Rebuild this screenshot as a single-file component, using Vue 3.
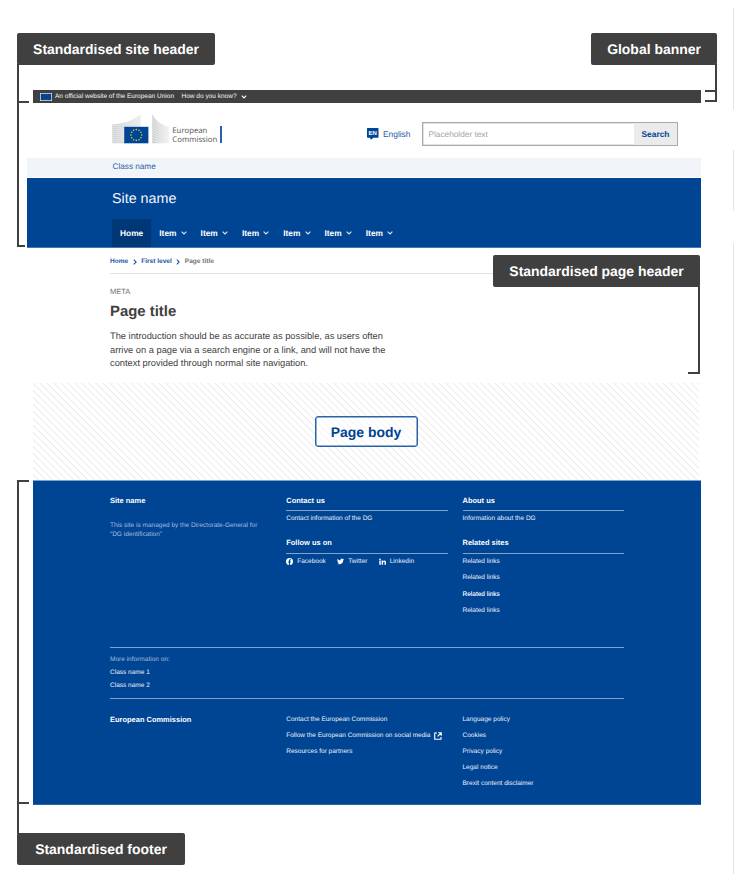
<script setup>
const navItems = ['Item', 'Item', 'Item', 'Item', 'Item', 'Item']
const related = ['Related links', 'Related links', 'Related links', 'Related links']
const policies = ['Language policy', 'Cookies', 'Privacy policy', 'Legal notice', 'Brexit content disclaimer']

// Twelve points on a circle, starting from the top
const stars = (cx, cy, r) =>
  Array.from({ length: 12 }, (_, i) => {
    const a = (i * Math.PI) / 6
    return { x: cx + r * Math.sin(a), y: cy - r * Math.cos(a) }
  })
const logoStars = stars(24.3, 21, 5.4)
const flagStars = stars(6, 4, 2.3)
const leftFan = Array.from({ length: 9 }, (_, i) => i)
</script>

<template>
  <div class="page">
    <div class="banner">
      <svg class="banner-flag" viewBox="0 0 12 8">
        <rect x="0" y="0" width="12" height="8" fill="#d4dbe8" />
        <rect x="0.8" y="0.8" width="10.4" height="6.4" fill="#00408f" />
        <circle v-for="(s, i) in flagStars" :key="i" :cx="s.x" :cy="s.y" r="0.3" fill="#6f8570" />
      </svg>
      <span class="banner-text">An official website of the European Union</span>
      <span class="banner-link">How do you know?</span>
      <svg class="banner-chevron" viewBox="0 0 6 4"><path d="M0.8 0.7 3 2.9 5.2 0.7" /></svg>
    </div>

    <header class="site-header">
      <div class="brand">
        <svg class="logo" viewBox="0 0 58 31">
          <defs>
            <linearGradient id="fanL" x1="0" x2="1"><stop offset="0" stop-color="#cbcdcf" /><stop offset="1" stop-color="#e8e9e9" /></linearGradient>
            <linearGradient id="fanR" x1="0" x2="1"><stop offset="0" stop-color="#cbcdcf" /><stop offset="1" stop-color="#eff0f0" /></linearGradient>
          </defs>
          <path d="M0.2 10.5C12 10 22 6 28.6 0.5V13H12.3V29.3H0.2Z" fill="url(#fanL)" />
          <path d="M40.2 0.5C44 7 50 11.5 57.2 13V29.3H40.2Z" fill="url(#fanR)" />
          <g fill="none" stroke="#fff" stroke-width="0.7" opacity="0.7">
            <path v-for="i in leftFan" :key="'l' + i" :d="`M0 ${12 + i * 2}C12 ${11.4 + i * 2} 22 ${7.6 + i * 2.1} 29 ${2.4 + i * 2.5}`" />
            <path v-for="i in leftFan" :key="'r' + i" :d="`M40 ${2.8 + i * 2.9}C44 ${9 + i * 2.3} 50 ${12.8 + i * 2} 58 ${14.4 + i * 1.8}`" />
          </g>
          <rect x="12.2" y="12.8" width="24.2" height="16.5" fill="#004494" />
          <circle v-for="(s, i) in logoStars" :key="i" :cx="s.x" :cy="s.y" r="0.8" fill="#d9d33a" />
        </svg>
        <div class="brand-name">
          <span>European</span>
          <span>Commission</span>
        </div>
        <div class="lang">
          <svg class="lang-icon" viewBox="0 0 12 12">
            <path d="M0.6 0H11Q11.500 0 11.500 0.600V9.100Q11.500 9.700 11 9.700H6.600L3.800 11.700 3 9.700H0.600Q0 9.700 0 9.100V0.600Q0 0 0.600 0Z" fill="#004494" />
            <text x="1.600" y="7">EN</text>
          </svg>
          <span>English</span>
        </div>
        <div class="search">
          <span class="search-field">Placeholder text</span>
          <span class="search-button">Search</span>
        </div>
      </div>
      <div class="class-bar">Class name</div>
      <div class="site-bar">
        <div class="site-name">Site name</div>
        <nav class="nav">
          <span class="nav-home">Home</span>
          <span v-for="(n, i) in navItems" :key="i" class="nav-item">
            {{ n }}
            <svg viewBox="0 0 6 4"><path d="M0.6 0.7 3 3 5.4 0.7" /></svg>
          </span>
        </nav>
      </div>
    </header>

    <section class="page-header">
      <div class="crumbs">
        <a>Home</a>
        <svg viewBox="0 0 4 6"><path d="M0.8 0.7 3.1 3 0.8 5.3" /></svg>
        <a>First level</a>
        <svg viewBox="0 0 4 6"><path d="M0.8 0.7 3.1 3 0.8 5.3" /></svg>
        <b>Page title</b>
      </div>
      <div class="meta">META</div>
      <h1>Page title</h1>
      <p class="intro">
        The introduction should be as accurate as possible, as users often<br />
        arrive on a page via a search engine or a link, and will not have the<br />
        context provided through normal site navigation.
      </p>
    </section>

    <main class="body"><span class="body-label">Page body</span></main>

    <footer class="footer">
      <div class="grid top">
        <div>
          <h2>Site name</h2>
          <p class="managed">This site is managed by the Directorate-General for<br />“DG identification”</p>
        </div>
        <div>
          <h2 class="ruled">Contact us</h2>
          <div class="row first">Contact information of the DG</div>
          <h2 class="ruled second">Follow us on</h2>
          <div class="social">
            <svg viewBox="0 0 16 16"><circle cx="8" cy="8" r="8" fill="#fff" /><path d="M6.7 16V10.3H4.8V8H6.7V6.3C6.7 4.2 7.9 3 9.9 3H11.4V5.1H10.3C9.4 5.1 9.1 5.6 9.1 6.3V8H11.3L10.9 10.3H9.1V16Z" fill="#004494" /></svg>
            <span class="fb">Facebook</span>
            <svg viewBox="0 0 24 24"><path fill="#fff" d="M24 4.6a10 10 0 0 1-2.8.8 5 5 0 0 0 2.2-2.7c-1 .6-2 1-3.1 1.2a4.9 4.9 0 0 0-8.4 4.5A14 14 0 0 1 1.7 3.2a4.9 4.9 0 0 0 1.5 6.6 5 5 0 0 1-2.2-.6v.1a4.9 4.9 0 0 0 3.9 4.8 5 5 0 0 1-2.2.1 4.9 4.9 0 0 0 4.6 3.4A9.9 9.9 0 0 1 0 19.500 14 14 0 0 0 7.500 21.700c9.100 0 14-7.500 14-14v-.6A10 10 0 0 0 24 4.600Z" /></svg>
            <span class="tw">Twitter</span>
            <svg viewBox="0 0 16 16"><g fill="#fff"><circle cx="2.3" cy="2.9" r="2" /><rect x="0.6" y="5.8" width="3.4" height="9.700" /><path d="M6 5.800H9.200V7.200C9.800 6.200 10.900 5.500 12.300 5.500 15.200 5.500 16 7.300 16 10V15.500H12.600V10.600C12.600 9.300 12.300 8.300 11.100 8.300 9.900 8.300 9.400 9.200 9.400 10.500V15.500H6Z" /></g></svg>
            <span>Linkedin</span>
          </div>
        </div>
        <div>
          <h2 class="ruled">About us</h2>
          <div class="row first">Information about the DG</div>
          <h2 class="ruled second">Related sites</h2>
          <div class="related">
            <div v-for="(r, i) in related" :key="i" class="row" :class="{ strong: i === 2 }">{{ r }}</div>
          </div>
        </div>
      </div>
      <div class="more">
        <div class="more-title">More information on:</div>
        <div>Class name 1</div>
        <div>Class name 2</div>
      </div>
      <div class="grid bottom">
        <h2>European Commission</h2>
        <div class="links">
          <div>Contact the European Commission</div>
          <div class="ext">
            <span>Follow the European Commission on social media</span>
            <svg viewBox="0 0 8 8"><path d="M3 1H0.7V7.300H7V5M4.300 0.700H7.300V3.700M7 1 3.600 4.400" /></svg>
          </div>
          <div>Resources for partners</div>
        </div>
        <div class="links">
          <div v-for="p in policies" :key="p">{{ p }}</div>
        </div>
      </div>
    </footer>

    <!-- Annotation labels and brackets over the layout -->
    <div class="bracket site-bracket"></div>
    <div class="tick site-tick"></div>
    <div class="bracket global-stem"></div>
    <div class="bracket global-bracket"></div>
    <div class="bracket page-bracket"></div>
    <div class="bracket footer-bracket"></div>
    <div class="tick footer-tick"></div>
    <div class="label site-label">Standardised site header</div>
    <div class="label global-label">Global banner</div>
    <div class="label page-label">Standardised page header</div>
    <div class="label footer-label">Standardised footer</div>
    <div class="edge edge-a"></div>
    <div class="edge edge-b"></div>
    <div class="edge edge-c"></div>
  </div>
</template>

<style>
body { margin: 0; background: #fff; }
</style>

<style scoped>
.page {
  position: relative;
  box-sizing: border-box;
  width: 734px;
  height: 882px;
  padding-top: 90px;
  overflow: hidden;
  background: #fff;
  color: #404040;
  font-family: "Liberation Sans", Arial, sans-serif;
  text-rendering: geometricPrecision;
}
svg { display: block; flex: none; }
h1, h2, p { margin: 0; }

.banner {
  display: flex;
  box-sizing: border-box;
  height: 13px;
  margin: 0 33px;
  padding-left: 7px;
  background: #404040;
  color: #f5f5f5;
  font-size: 6.53px;
  line-height: 11px;
}
.banner-flag { width: 12px; height: 8px; margin-top: 3px; }
.banner-text { margin-left: 3px; padding-top: 1px; width: 126.5px; white-space: nowrap; }
.banner-link { padding-top: 1px; }
.banner-chevron { width: 6px; height: 4px; margin: 5px 0 0 4px; }
.banner-chevron path, .nav-item path { fill: none; stroke: #fff; stroke-width: 1.1; }

.site-header { margin: 0 33px 0 27px; }
.brand { display: flex; height: 55px; padding-left: 85px; }
.logo { width: 58px; height: 31px; margin-top: 11px; }
.brand-name {
  display: flex;
  flex-direction: column;
  box-sizing: border-box;
  width: 52px;
  height: 17px;
  margin-top: 23px;
  padding: 1px 0 0 2.3px;
  border-right: 2px solid #2a62a9;
  color: #5c5c5c;
  font: 7.75px/8.5px "Noto Sans", sans-serif;
}
.lang { display: flex; box-sizing: border-box; width: 55px; margin-left: 145px; padding-top: 25px; color: #1f5aa3; font-size: 8.4px; line-height: 12px; }
.lang-icon { width: 12px; height: 12px; margin-right: 4px; }
.lang-icon text { fill: #fff; font: bold 6px "Liberation Sans", sans-serif; }
.search {
  display: flex;
  box-sizing: border-box;
  width: 256px;
  height: 24px;
  margin-top: 19px;
  border: 1px solid #a9a9a9;
  box-shadow: inset 0 0 0 0.5px #c8c8c8;
  line-height: 23px;
}
.search-field { box-sizing: border-box; width: 211px; padding-left: 5.5px; color: #a5a5a5; font-size: 8.28px; }
.search-button { flex: 1; background: #ebebeb; color: #004494; font-weight: 700; font-size: 8.4px; text-align: center; }

.class-bar { height: 19px; margin-bottom: 1px; padding-left: 85.5px; background: #f1f4f9; color: #2d62a5; font-size: 8.2px; line-height: 18px; }
.site-bar { box-sizing: border-box; height: 70px; padding: 1px 0 0 85px; background: #004494; border-bottom: 1px solid #4277b6; color: #fff; }
.site-name { height: 40px; font-size: 14.3px; line-height: 41px; color: #f2f6fb; }
.nav { display: flex; height: 28px; font-size: 8.35px; line-height: 28px; font-weight: 700; }
.nav-home { width: 39.3px; text-align: center; background: #003776; }
.nav-item { display: flex; align-items: center; gap: 4.4px; box-sizing: border-box; width: 41.3px; padding-left: 8px; }
.nav-item svg { width: 6px; height: 4px; }
.nav-item path { stroke: #dbe6f3; }

.page-header { height: 135px; margin: 0 110px; }
.crumbs { display: flex; align-items: center; padding-top: 2px; border-bottom: 1px solid #dbe4ee; font-size: 6.55px; line-height: 23px; font-weight: 700; color: #1c56a0; }
.crumbs svg { width: 4px; height: 6px; margin: 1px 4.5px 0; }
.crumbs path { fill: none; stroke: #1c56a0; stroke-width: 1.1; }
.crumbs b { color: #757575; }
.meta { margin-top: 11px; font-size: 7.5px; line-height: 13px; color: #737373; }
h1 { font-size: 14.9px; line-height: 28px; height: 27px; }
.intro { margin-top: 5.4px; font-size: 9.3px; line-height: 13.2px; white-space: nowrap; }

.body {
  display: flex;
  align-items: center;
  justify-content: center;
  height: 97px;
  margin: 0 35px 0 33px;
  background: repeating-linear-gradient(45deg, #fff 0, #fff 3.3px, #ebebeb 3.9px, #ebebeb 4.4px, #fff 4.95px);
}
.body-label { box-sizing: border-box; width: 103px; height: 31px; border: 1px solid #2a62a9; box-shadow: inset 0 0 0 0.5px #2a62a9; border-radius: 3px; background: rgba(255, 255, 255, 0.5); color: #004494; font-size: 13.95px; font-weight: 700; line-height: 30px; text-align: center; }

.footer { box-sizing: border-box; height: 325px; margin: 0 33px; padding: 0 77px; background: #004494; border-top: 1px solid #7fa3cb; border-bottom: 1px solid #2a62a9; color: #ebf1f8; font-size: 6.53px; line-height: 13px; }
.grid { display: grid; grid-template-columns: repeat(3, 161.5px); column-gap: 14.75px; white-space: nowrap; }
h2 { font-size: 7.47px; line-height: 15px; color: #fff; }
.top { box-sizing: border-box; height: 166px; padding-top: 12px; align-items: start; }
.ruled { padding-bottom: 2px; border-bottom: 1px solid #7fa1ca; }
.row.first { padding-top: 1px; }
.second { margin-top: 10px; padding-bottom: 3px; }
.managed { margin-top: 13px; font-size: 6.5px; line-height: 9px; color: #a5bddb; }
.social { display: flex; align-items: center; padding-top: 1px; }
.social svg { width: 7px; height: 7px; margin: 0 4px 0 0; }
.social .fb { width: 40px; }
.social .tw { width: 30.5px; }
.related { display: grid; row-gap: 3.35px; padding-top: 1px; }
.row.strong { color: #fff; text-shadow: 0 0 0.5px rgba(255, 255, 255, 0.5); }
.more { box-sizing: border-box; height: 52px; padding-top: 6px; border-top: 1px solid #7fa1ca; border-bottom: 1px solid #7fa1ca; line-height: 12.8px; }
.more-title { color: #a5bddb; }
.bottom { padding-top: 13px; }
.links { display: grid; row-gap: 1px; line-height: 15px; align-content: start; }
.ext { display: flex; align-items: center; font-size: 6.5px; }
.ext svg { width: 8px; height: 8px; margin-left: 3.5px; }
.ext path { fill: none; stroke: #fff; stroke-width: 1.1; }

.label { position: absolute; box-sizing: border-box; height: 32px; border-radius: 2px; background: #404040; color: #fff; font-size: 13.95px; font-weight: 700; line-height: 32px; text-align: center; white-space: nowrap; }
.site-label { left: 17px; top: 33px; width: 198px; }
.global-label { left: 591px; top: 33px; width: 126px; }
.page-label { left: 493px; top: 255px; width: 207px; }
.footer-label { left: 17px; top: 833px; width: 168px; }
.bracket { position: absolute; box-sizing: border-box; border: 0 solid #404040; }
.site-bracket { left: 17px; top: 64px; width: 8px; height: 183px; border-width: 0 0 2px 2px; }
.global-stem { left: 715px; top: 64px; width: 2px; height: 27px; border-right-width: 2px; }
.global-bracket { left: 705px; top: 90px; width: 12px; height: 12px; border-width: 2px 2px 2px 0; }
.page-bracket { left: 688px; top: 286px; width: 12px; height: 88px; border-width: 0 2px 2px 0; }
.footer-bracket { left: 17px; top: 480px; width: 12px; height: 354px; border-width: 2px 0 0 2px; }
.tick { position: absolute; left: 17px; width: 12px; height: 2px; background: #404040; }
.site-tick { top: 101px; }
.footer-tick { top: 802px; }
.edge { position: absolute; left: 733px; width: 1px; background: #e4e4e4; }
.edge-a { top: 8px; height: 102px; }
.edge-b { top: 150px; height: 61px; }
.edge-c { top: 243px; height: 631px; }
</style>
